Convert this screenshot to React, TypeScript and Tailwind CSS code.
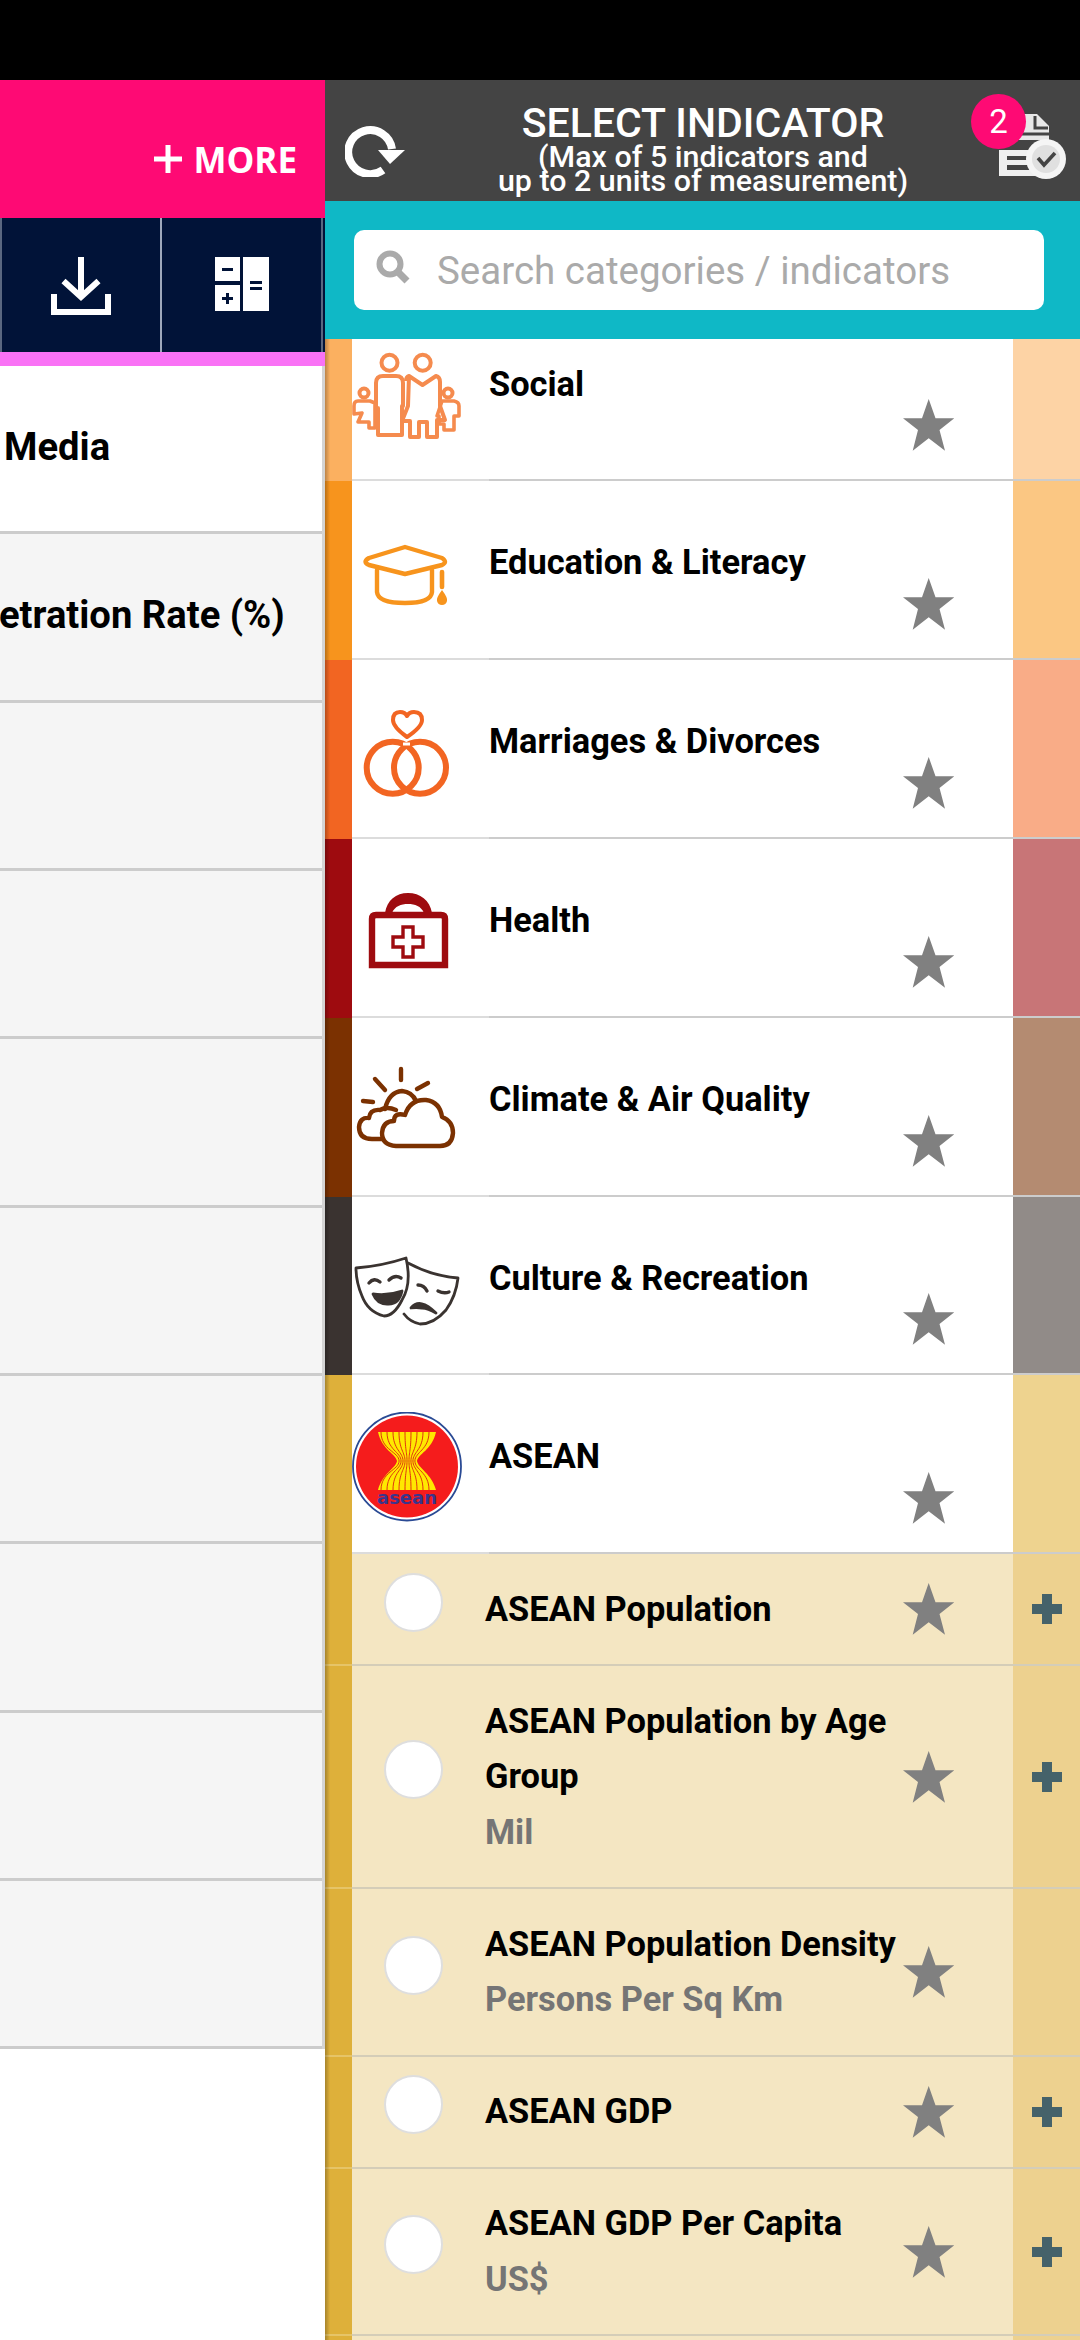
import React from "react";

function Star() {
  return (
    <svg width="52" height="52" viewBox="0 0 52 52" className="shrink-0">
      <polygon points="25.7,0 32.5,19.3 51.3,19.3 36.5,31 42,51.7 25.7,39.3 9.7,51.7 15,31 0,19.3 19,19.3" fill="#808080" />
    </svg>
  );
}

function Plus() {
  return (
    <svg width="30" height="30" viewBox="0 0 30 30">
      <path d="M10 0h10v10h10v10H20v10H10V20H0V10h10z" fill="#45626a" />
    </svg>
  );
}

function Social() {
  return (
    <svg width="110" height="110" viewBox="0 0 110 110" fill="none" stroke="#f58b4e" strokeWidth="4" strokeLinejoin="round">
      <circle cx="37.5" cy="22.7" r="8" />
      <circle cx="70.7" cy="22.7" r="8" />
      <path d="M26 95V68h-2V43q0-7 7-7h13q7 0 7 7v23h-1v29z" />
      <path d="M57 36q-3 1-3 5M57 36l13.5 9L84 36q4 1 4 6v24l5 14h-8v17H75V82h-8v15H58V81h-8l6-15z" />
      <circle cx="12" cy="53" r="4.5" />
      <circle cx="96" cy="53" r="4.5" />
      <path d="M6 61h12l5 2v25h-6v-6H6l4-9-8 1v-8q0-5 4-5z" strokeWidth="3.6" />
      <path d="M90 61h12q5 1 5 5v10h-5v14h-10v-6h-5v-8h-2z" strokeWidth="3.6" />
    </svg>
  );
}

function Cap() {
  return (
    <svg width="110" height="110" viewBox="0 0 110 110" fill="none" stroke="#f7941d" strokeWidth="4.4" strokeLinejoin="round" strokeLinecap="round">
      <path d="M53 29 L90 40 Q96 44 90 47 L53 56 L17 47 Q10 44 17 40z" />
      <path d="M25 52V74Q26 85 53 85Q79 85 80 74V52" />
      <path d="M90 54V69" strokeWidth="4.6" />
      <path d="M90 72q6 8 5 11q-1 4-5 4q-4 0-5-4q-1-3 5-11z" fill="#f7941d" stroke="none" />
    </svg>
  );
}

function Rings() {
  return (
    <svg width="110" height="110" viewBox="0 0 110 110" fill="none" stroke="#f26522" strokeWidth="6">
      <path d="M55 40 Q41 30 41 23 Q41 15 48 15 Q53 15 55 19 Q57 15 62 15 Q70 15 70 23 Q70 30 55 40z" strokeWidth="4" strokeLinejoin="round" />
      <circle cx="40.7" cy="70.7" r="26" />
      <circle cx="68" cy="70.7" r="26" />
      <path d="M51 47 l7 0" stroke="#ffffff" strokeWidth="3" />
    </svg>
  );
}

function Bag() {
  return (
    <svg width="110" height="110" viewBox="0 0 110 110" fill="none">
      <path d="M33 37C35 24 44 17 56 17C68 17 78 24 80 37H72C69 30 63 28 56 28C49 28 43 30 40 37z" fill="#9e0b0f" />
      <path d="M20 89V43q0-4 4-4H89q4 0 4 4V89z" stroke="#9e0b0f" strokeWidth="6.4" />
      <path d="M51 51h10v10h10v10H61v10H51V71H41V61h10z" stroke="#9e0b0f" strokeWidth="3.4" />
    </svg>
  );
}

function Cloud() {
  return (
    <svg width="110" height="110" viewBox="0 0 110 110" fill="none" stroke="#7b3101" strokeWidth="4.4" strokeLinecap="round" strokeLinejoin="round">
      <path d="M49 14V25M23 24L33 35M65 34L76 28M11 46L21 47" />
      <path d="M33 54Q37 37 50 36Q60 37 64 46" />
      <path d="M44 91Q30 90 30 78Q31 66 42 66Q42 57 53 60Q58 44 74 45Q88 47 90 62Q101 66 101 78Q100 91 88 91z" />
      <path d="M31 84H20Q7 84 7 72Q8 62 17 63Q18 54 28 55Q35 51 44 55" />
    </svg>
  );
}

function Masks() {
  return (
    <svg width="110" height="110" viewBox="0 0 110 110" fill="none" stroke="#3a3330" strokeWidth="2.8" strokeLinejoin="round" strokeLinecap="round">
      <path d="M4 34Q30 32 54 24Q60 50 50 66Q42 82 32 82Q16 78 10 62Q4 48 4 34z" />
      <path d="M56 29Q80 42 106 44Q104 62 94 76Q82 90 68 90Q58 88 52 80" />
      <path d="M21 60Q36 62 50 57Q47 71 35 70Q25 70 21 60z" fill="#3a3330" />
      <path d="M17 49Q22 43 28 48M37 46Q43 40 49 44" strokeWidth="3.4" />
      <path d="M66 51Q72 51 75 57M86 57Q92 60 97 58" strokeWidth="3.4" />
      <path d="M59 74Q68 63 84 79Q76 74 70 74Q64 73 59 74z" fill="#3a3330" />
    </svg>
  );
}

function Asean() {
  const tops = [29, 35, 41, 47, 53, 59, 65, 71, 77];
  return (
    <svg width="110" height="110" viewBox="0 0 110 110" fill="none">
      <circle cx="55" cy="54.5" r="54" fill="#ffffff" stroke="#2a4a94" strokeWidth="1.8" />
      <circle cx="55" cy="54.5" r="51" fill="#f51c1c" />
      <path d="M26 20H84C80 38 66 42 65 49C66 56 80 62 84 78H26C30 62 44 56 45 49C44 42 30 38 26 20z" fill="#ffe800" />
      {tops.map((x) => {
        const w = 55 + (x - 53) * 0.33;
        return <path key={x} d={`M${x} 20C${x} 38 ${w} 40 ${w} 49C${w} 58 ${x} 60 ${x} 78`} stroke="#e0350f" strokeWidth="1" />;
      })}
      <text x="25" y="92" textLength="60" lengthAdjust="spacingAndGlyphs" fontFamily="'DejaVu Sans', sans-serif" fontWeight="700" fontSize="17" fill="#3a358c">asean</text>
    </svg>
  );
}

const categories = [
  { name: "Education & Literacy", bar: "bg-[#f7941d]", strip: "bg-[#fbc783]", icon: <Cap /> },
  { name: "Marriages & Divorces", bar: "bg-[#f26522]", strip: "bg-[#f9ac87]", icon: <Rings /> },
  { name: "Health", bar: "bg-[#9e0b0f]", strip: "bg-[#c87577]", icon: <Bag /> },
  { name: "Climate & Air Quality", bar: "bg-[#7b3101]", strip: "bg-[#b48b71]", icon: <Cloud /> },
  { name: "Culture & Recreation", bar: "bg-[#3a3330]", strip: "bg-[#918b88]", icon: <Masks /> },
  { name: "ASEAN", bar: "bg-[#deb03a]", strip: "bg-[#eed38f]", icon: <Asean /> },
];

const indicators = [
  { lines: ["ASEAN Population"], plus: true },
  { lines: ["ASEAN Population by Age", "Group"], unit: "Mil", plus: true },
  { lines: ["ASEAN Population Density"], unit: "Persons Per Sq Km", plus: false },
  { lines: ["ASEAN GDP"], plus: true },
  { lines: ["ASEAN GDP Per Capita"], unit: "US$", plus: true },
];

function CategoryRow({ name, bar, strip, icon, short }: { name: string; bar: string; strip: string; icon: React.ReactNode; short?: boolean }) {
  return (
    <div className={short ? "flex h-[142px]" : "flex h-[178.9px]"}>
      <div className={`w-[27px] shrink-0 ${bar}`} />
      <div className={short ? "w-[137px] shrink-0 bg-white pt-px border-b-2 border-[#dcdcdc]" : "w-[137px] shrink-0 bg-white pt-[37px] border-b-2 border-[#dcdcdc]"}>{icon}</div>
      <div className="flex flex-1 bg-white border-b-2 border-[#cccccc]">
        <div className={short ? "w-[414px] pt-[18px] text-[34.4px] leading-[55.5px] font-bold text-black" : "w-[414px] pt-[54px] text-[34.4px] leading-[55.5px] font-bold text-black"}>{name}</div>
        <div className="self-end mb-[28px]"><Star /></div>
      </div>
      <div className={`w-[67px] shrink-0 ${strip} border-b-2 border-[#cccccc]`} />
    </div>
  );
}

function IndicatorRow({ lines, unit, plus }: { lines: string[]; unit?: string; plus: boolean }) {
  return (
    <div className="flex">
      <div className="w-[27px] shrink-0 bg-[#deb03a] border-b-2 border-[#e6c468]" />
      <div className="flex flex-1 items-center bg-[#f4e6c2] border-b-2 border-[#d4cdb8]">
        <div className="w-[133px] shrink-0 pl-[32px]">
          <div className="mb-[14px] h-[59px] w-[59px] rounded-full bg-white border-2 border-[#dedede]" />
        </div>
        <div className="w-[418px] py-[27.25px] text-[34.4px] leading-[55.5px] font-bold text-black">
          {lines.map((l) => (
            <div key={l} className="whitespace-nowrap">{l}</div>
          ))}
          {unit && <div className="text-[#757575]">{unit}</div>}
        </div>
        <Star />
      </div>
      <div className="flex w-[67px] shrink-0 items-center justify-center bg-[#edd18f] border-b-2 border-[#d4cdb8]">
        {plus && <Plus />}
      </div>
    </div>
  );
}

function LeftRow({ text, white, clip }: { text?: string; white?: boolean; clip?: boolean }) {
  return (
    <div className={white ? "flex h-[168.33px] items-center overflow-hidden bg-white border-b-[3px] border-[#cccccc]" : "flex h-[168.33px] items-center overflow-hidden bg-[#f5f5f5] border-b-[3px] border-[#cccccc]"}>
      {text && (
        <div className={clip ? "-ml-[1px] -mt-[2px] whitespace-nowrap text-[38.2px] font-bold text-black" : "ml-[4px] -mt-[2px] whitespace-nowrap text-[38.2px] font-bold text-black"}>{text}</div>
      )}
    </div>
  );
}

export default function App() {
  return (
    <div className="h-[2340px] w-[1080px] overflow-hidden bg-white font-['Roboto',sans-serif]">
      <div className="h-[80px] bg-black" />
      <div className="flex h-[2260px]">
        {/* Left table */}
        <div className="flex w-[325px] shrink-0 flex-col">
          <div className="flex h-[138px] items-end justify-end gap-[11px] bg-[#fe0a74] pb-[44px] pr-[28px]">
            <svg width="28" height="28" viewBox="0 0 28 28" className="mb-[1px]">
              <path d="M11.5 0h5v11.5H28v5H16.5V28h-5V16.5H0v-5h11.5z" fill="#ffffff" />
            </svg>
            <span className="font-['Open_Sans',sans-serif] text-[35px] font-bold leading-[28px] text-white">MORE</span>
          </div>
          <div className="flex h-[134px] border-l-2 border-[#5a6780] bg-[#011338] pr-[2px]">
            <div className="flex w-[160px] items-center justify-center border-r-2 border-[#9ea8bb]">
              <svg width="60" height="60" viewBox="0 0 60 60" fill="none" stroke="#ffffff" strokeWidth="6" className="mt-[2px]">
                <path d="M30 1V40" />
                <path d="M12.5 25L30 41L47.5 25" />
                <path d="M3 38V56H57V38" />
              </svg>
            </div>
            <div className="flex flex-1 items-center justify-center border-r-2 border-[#5a6780]">
              <svg width="54" height="54" viewBox="0 0 54 54" className="-mt-[2px]">
                <path d="M0 0h25v24H0zM0 28h25v26H0zM28 0h26v54H28z" fill="#ffffff" />
                <path d="M7 11h11v3H7zM7 40h11v3H7zM11 36h3v11h-3zM35 24h12v3H35zM35 30h12v3H35z" fill="#011338" />
              </svg>
            </div>
          </div>
          <div className="h-[14px] bg-[#f972f5]" />
          <div className="border-r-[3px] border-[#d4d4d4]">
            <LeftRow text="Media" white />
            <LeftRow text="etration Rate (%)" clip />
            <LeftRow />
            <LeftRow />
            <LeftRow />
            <LeftRow />
            <LeftRow />
            <LeftRow />
            <LeftRow />
            <LeftRow />
          </div>
        </div>

        {/* Right panel */}
        <div className="relative flex-1 overflow-hidden">
          <div className="relative h-[121px] overflow-hidden bg-[#444444] text-white">
            <div className="flex h-full">
              <div className="w-[111px] shrink-0 pl-[20px] pt-[45px]">
                <svg width="60" height="52" viewBox="0 0 60 52" fill="none">
                  <path d="M47 24A22 22 0 1 0 38 45" stroke="#ffffff" strokeWidth="8" />
                  <path d="M33 25H60L45 39z" fill="#ffffff" />
                </svg>
              </div>
              <div className="w-[534px] shrink-0 pt-[23px] text-center">
                <div className="whitespace-nowrap text-[41px] font-medium leading-[40px]">SELECT INDICATOR</div>
                <div className="mt-[2px] whitespace-nowrap text-[30.4px] font-medium leading-[24px]">(Max of 5 indicators and</div>
                <div className="whitespace-nowrap text-[30.4px] font-medium leading-[24px]">up to 2 units of measurement)</div>
              </div>
              <div className="pl-[29px] pt-[32px]">
                <svg width="68" height="68" viewBox="0 0 68 68" fill="none">
                  <path d="M8 2H38L50 14V28H8z" fill="#e8e8e8" />
                  <path d="M36 4L36 16L49 16" stroke="#444444" strokeWidth="3" />
                  <path d="M10 22H52" stroke="#444444" strokeWidth="3" />
                  <path d="M0 38H36V44H8V48H30V53H8V58H36V64H0z" fill="#f0f0f0" />
                  <circle cx="47" cy="47" r="20" fill="#f5f5f5" />
                  <circle cx="47" cy="47" r="14" fill="#e0e0e0" />
                  <path d="M39 46L45 53L56 41" stroke="#444444" strokeWidth="3.6" />
                </svg>
              </div>
            </div>
            <div className="absolute left-[646px] top-[14px] flex h-[55px] w-[55px] items-center justify-center rounded-full bg-[#fe0a74] text-[33px] leading-none">2</div>
          </div>
          <div className="h-[138px] bg-[#0fb8c6] px-[29px] pt-[29px]">
            <div className="flex h-[80px] w-[690px] items-center rounded-[10px] bg-white pl-[22px]">
              <svg width="34" height="34" viewBox="0 0 34 34" fill="none" stroke="#aaaaaa" className="shrink-0 -translate-y-[3px]">
                <circle cx="14" cy="14" r="10.5" strokeWidth="6" />
                <path d="M21 21L31 31" strokeWidth="7" />
              </svg>
              <span className="ml-[27px] mt-[2px] whitespace-nowrap text-[38.5px] text-[#aaaaaa]">Search categories / indicators</span>
            </div>
          </div>
          <div className="relative">
            <CategoryRow name="Social" bar="bg-[#fbb060]" strip="bg-[#fdd3a5]" icon={<Social />} short />
            {categories.map((c) => (
              <CategoryRow key={c.name} {...c} />
            ))}
            {indicators.map((r) => (
              <IndicatorRow key={r.lines[0]} {...r} />
            ))}
            <div className="flex h-[20px]">
              <div className="w-[27px] shrink-0 bg-[#deb03a]" />
              <div className="flex-1 bg-[#f4e6c2]" />
              <div className="w-[67px] shrink-0 bg-[#edd18f]" />
            </div>
            <div className="absolute inset-y-0 left-0 w-[5px] bg-gradient-to-r from-black/25 to-transparent" />
          </div>
        </div>
      </div>
    </div>
  );
}
